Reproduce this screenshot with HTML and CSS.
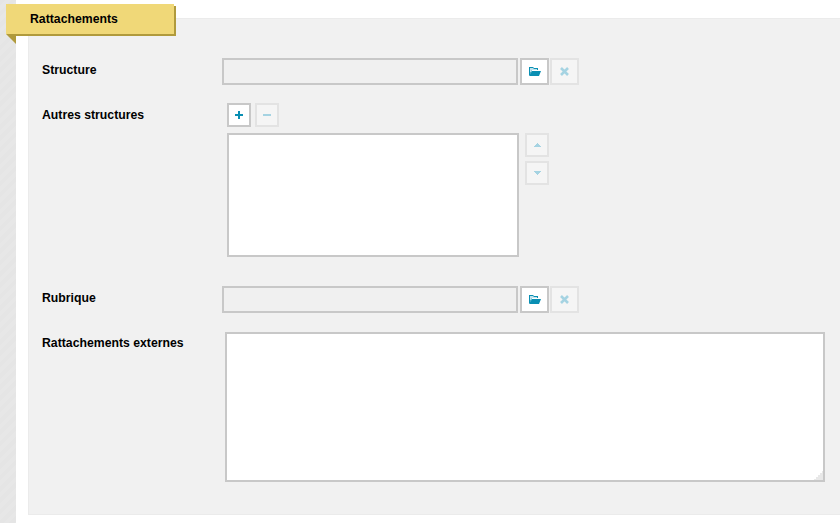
FILE: index.html
```html
<!DOCTYPE html>
<html lang="fr">
<head>
  <meta charset="UTF-8">
  <title>Rattachements</title>
  <link rel="stylesheet" href="styles.css">
</head>
<body>

<div class="page">
  <div class="rail"></div>

  <div class="contenu">
    <div class="onglet">Rattachements</div>

    <div class="panneau">
      <!-- Structure -->
      <div class="ligne ligne-structure">
        <label class="libelle">Structure</label>
        <div class="champ-ligne">
          <div class="champ"></div>
          <div class="bouton bouton-large">
            <svg width="12" height="9" viewBox="0 0 12 9"><path d="M0 0h4l1 1h4v2H3L1 8H0z" fill="#0a8fb3"/><path d="M1 1h3l1 1h3v1H3L1 6z" fill="#bfe3ee"/><path d="M3 4h9l-2 5H0z" fill="#0a8fb3"/></svg>
          </div>
          <div class="bouton bouton-large inactif">
            <svg width="9" height="9" viewBox="0 0 9 9"><path d="M1 1l7 7M8 1l-7 7" stroke="#a5d3e2" stroke-width="2.600"/></svg>
          </div>
        </div>
      </div>

      <!-- Autres structures -->
      <div class="ligne ligne-autres">
        <label class="libelle">Autres structures</label>
        <div class="autres">
          <div class="autres-outils">
            <div class="bouton">
              <svg width="8" height="8" viewBox="0 0 8 8"><path d="M3 0h2v3h3v2h-3v3h-2v-3h-3v-2h3z" fill="#0a8fb3"/></svg>
            </div>
            <div class="bouton inactif">
              <svg width="8" height="2" viewBox="0 0 8 2"><rect width="8" height="2" fill="#a5d3e2"/></svg>
            </div>
          </div>
          <div class="autres-liste">
            <div class="liste"></div>
            <div class="fleches">
              <div class="bouton inactif">
                <svg width="7" height="4" viewBox="0 0 7 4"><path d="M3 0h1v1h1v1h1v1h1v1H0V3h1V2h1V1h1z" fill="#a5d3e2"/></svg>
              </div>
              <div class="bouton inactif">
                <svg width="7" height="4" viewBox="0 0 7 4"><path d="M0 0h7v1H6v1H5v1H4v1H3V3H2V2H1V1H0z" fill="#a5d3e2"/></svg>
              </div>
            </div>
          </div>
        </div>
      </div>

      <!-- Rubrique -->
      <div class="ligne ligne-rubrique">
        <label class="libelle">Rubrique</label>
        <div class="champ-ligne">
          <div class="champ"></div>
          <div class="bouton bouton-large">
            <svg width="12" height="9" viewBox="0 0 12 9"><path d="M0 0h4l1 1h4v2H3L1 8H0z" fill="#0a8fb3"/><path d="M1 1h3l1 1h3v1H3L1 6z" fill="#bfe3ee"/><path d="M3 4h9l-2 5H0z" fill="#0a8fb3"/></svg>
          </div>
          <div class="bouton bouton-large inactif">
            <svg width="9" height="9" viewBox="0 0 9 9"><path d="M1 1l7 7M8 1l-7 7" stroke="#a5d3e2" stroke-width="2.600"/></svg>
          </div>
        </div>
      </div>

      <!-- Rattachements externes -->
      <div class="ligne ligne-externes">
        <label class="libelle">Rattachements externes</label>
        <div class="zone-texte">
          <svg class="poignee" width="9" height="9" viewBox="0 0 9 9"><path d="M9 0v9H0V8h2V6h2V4h2V2h2V0z" fill="#e8e8e8"/></svg>
        </div>
      </div>
    </div>
  </div>
</div>

</body>
</html>
```

FILE: styles.css
```css
* {
  box-sizing: border-box;
}

body {
  margin: 0;
  background-color: #fff;
  color: #000;
  font-family: 'Liberation Sans', Arial, sans-serif;
  font-size: 12.25px;
}

.page {
  display: flex;
  height: 523px;
  overflow: hidden;
}

.rail {
  width: 16px;
  background-color: #e6e6e6;
  background-image: repeating-linear-gradient(135deg, #e5e5e5 0, #e5e5e5 4px, #e7e7e7 4px, #e7e7e7 8px);
}

.contenu {
  position: relative;
  flex: 1;
  padding: 18px 0 8px 12px;
}

/* onglet jaune par dessus le panneau */
.onglet {
  position: absolute;
  top: 4px;
  left: -10px;
  width: 168px;
  height: 30px;
  padding-left: 24px;
  background-color: #f0d878;
  box-shadow: 2px 2px 0 #b09a3c;
  font-weight: bold;
  line-height: 30px;
}

.onglet::after {
  content: "";
  position: absolute;
  top: 30px;
  left: 0;
  border-top: 10px solid #b09a3c;
  border-left: 10px solid transparent;
}

.panneau {
  height: 497px;
  padding: 39px 0 0 13px;
  background-color: #f1f1f1;
  border: 1px solid #ebebeb;
  border-right: none;
}

.ligne {
  display: flex;
}

.libelle {
  flex: none;
  width: 180px;
  padding-top: 5px;
  font-weight: bold;
  line-height: 14px;
}

.ligne-autres {
  margin-top: 18px;
}

.ligne-rubrique {
  margin-top: 29px;
}

.ligne-externes {
  margin-top: 19px;
}

.ligne-externes .libelle {
  width: 183px;
  padding-top: 4px;
}

.champ-ligne {
  display: flex;
}

.champ {
  width: 296px;
  height: 27px;
  margin-right: 2px;
  background-color: #f0f0f0;
  border: 2px solid #c8c8c8;
}

.bouton {
  display: flex;
  align-items: center;
  justify-content: center;
  width: 24px;
  height: 24px;
  background-color: #fff;
  border: 2px solid #c8c8c8;
}

.bouton-large {
  width: 29px;
  height: 27px;
}

.bouton.inactif {
  background-color: #f5f5f5;
  border-color: #e3e3e3;
}

.bouton-large.inactif {
  margin-left: 1px;
}

.autres {
  margin-left: 5px;
}

.autres-outils {
  display: flex;
  gap: 4px;
}

.autres-liste {
  display: flex;
  gap: 6px;
  margin-top: 6px;
}

.liste {
  width: 292px;
  height: 124px;
  background-color: #fff;
  border: 2px solid #c8c8c8;
}

.fleches {
  display: flex;
  flex-direction: column;
  gap: 4px;
}

.zone-texte {
  position: relative;
  width: 600px;
  height: 150px;
  background-color: #fff;
  border: 2px solid #c8c8c8;
}

.poignee {
  position: absolute;
  right: 0;
  bottom: 0;
}
```
